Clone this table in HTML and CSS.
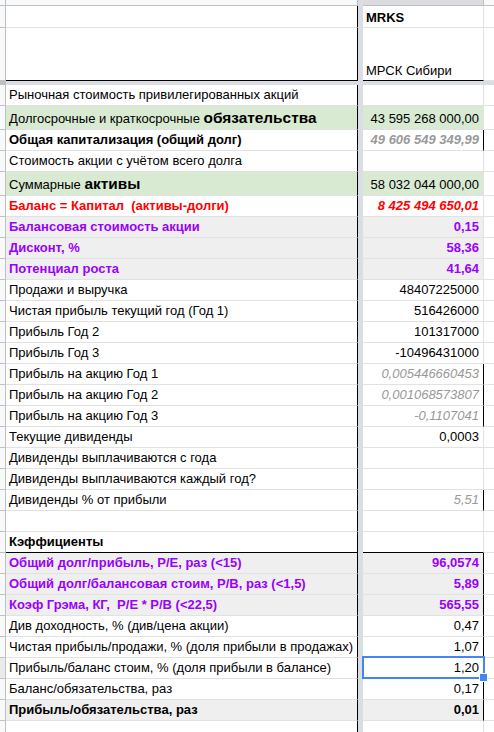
FILE: index.html
```html
<!DOCTYPE html>
<html lang="ru">
<head>
<meta charset="utf-8">
<title>MRKS</title>
<link rel="stylesheet" href="styles.css">
</head>
<body>
<div class="sheet">
  <div class="row colheads">
    <div class="rh corner"></div>
    <div class="ch cha"></div>
    <div class="fz"></div>
    <div class="ch chb"></div>
    <div class="ch chc"></div>
  </div>

  <div class="row r-ticker">
    <div class="rh"></div>
    <div class="c a"></div>
    <div class="fz"></div>
    <div class="c b left bold">MRKS</div>
    <div class="c x"></div>
  </div>
  <div class="row r-name bb-black">
    <div class="rh"></div>
    <div class="c a"></div>
    <div class="fz"></div>
    <div class="c b left">МРСК Сибири</div>
    <div class="c x"></div>
  </div>

  <div class="row hfreeze">
    <div class="rh handle"></div>
    <div class="hbar"></div>
  </div>

  <div class="row">
    <div class="rh"></div>
    <div class="c a">Рыночная стоимость привилегированных акций</div>
    <div class="fz"></div>
    <div class="c b"></div>
    <div class="c x"></div>
  </div>
  <div class="row tall green">
    <div class="rh"></div>
    <div class="c a">Долгосрочные и краткосрочные&nbsp;<b class="big">обязательства</b></div>
    <div class="fz"></div>
    <div class="c b">43 595 268 000,00</div>
    <div class="c x"></div>
  </div>
  <div class="row">
    <div class="rh"></div>
    <div class="c a bold">Общая капитализация (общий долг)</div>
    <div class="fz"></div>
    <div class="c b bold italic muted rb">49 606 549 349,99</div>
    <div class="c x"></div>
  </div>
  <div class="row">
    <div class="rh"></div>
    <div class="c a">Стоимость акции с учётом всего долга</div>
    <div class="fz"></div>
    <div class="c b"></div>
    <div class="c x"></div>
  </div>
  <div class="row tall green">
    <div class="rh"></div>
    <div class="c a">Суммарные&nbsp;<b class="big">активы</b></div>
    <div class="fz"></div>
    <div class="c b">58 032 044 000,00</div>
    <div class="c x"></div>
  </div>
  <div class="row red">
    <div class="rh"></div>
    <div class="c a bold">Баланс = Капитал &nbsp;(активы-долги)</div>
    <div class="fz"></div>
    <div class="c b bold italic">8 425 494 650,01</div>
    <div class="c x"></div>
  </div>
  <div class="row grey purple">
    <div class="rh"></div>
    <div class="c a bold">Балансовая стоимость акции</div>
    <div class="fz"></div>
    <div class="c b bold">0,15</div>
    <div class="c x"></div>
  </div>
  <div class="row grey purple">
    <div class="rh"></div>
    <div class="c a bold">Дисконт, %</div>
    <div class="fz"></div>
    <div class="c b bold">58,36</div>
    <div class="c x"></div>
  </div>
  <div class="row grey purple">
    <div class="rh"></div>
    <div class="c a bold">Потенциал роста</div>
    <div class="fz"></div>
    <div class="c b bold">41,64</div>
    <div class="c x"></div>
  </div>
  <div class="row">
    <div class="rh"></div>
    <div class="c a">Продажи и выручка</div>
    <div class="fz"></div>
    <div class="c b">48407225000</div>
    <div class="c x"></div>
  </div>
  <div class="row">
    <div class="rh"></div>
    <div class="c a">Чистая прибыль текущий год (Год 1)</div>
    <div class="fz"></div>
    <div class="c b">516426000</div>
    <div class="c x"></div>
  </div>
  <div class="row">
    <div class="rh"></div>
    <div class="c a">Прибыль Год 2</div>
    <div class="fz"></div>
    <div class="c b">101317000</div>
    <div class="c x"></div>
  </div>
  <div class="row">
    <div class="rh"></div>
    <div class="c a">Прибыль Год 3</div>
    <div class="fz"></div>
    <div class="c b">-10496431000</div>
    <div class="c x"></div>
  </div>
  <div class="row">
    <div class="rh"></div>
    <div class="c a">Прибыль на акцию Год 1</div>
    <div class="fz"></div>
    <div class="c b italic muted rb">0,005446660453</div>
    <div class="c x"></div>
  </div>
  <div class="row">
    <div class="rh"></div>
    <div class="c a">Прибыль на акцию Год 2</div>
    <div class="fz"></div>
    <div class="c b italic muted rb">0,001068573807</div>
    <div class="c x"></div>
  </div>
  <div class="row">
    <div class="rh"></div>
    <div class="c a">Прибыль на акцию Год 3</div>
    <div class="fz"></div>
    <div class="c b italic muted rb">-0,1107041</div>
    <div class="c x"></div>
  </div>
  <div class="row">
    <div class="rh"></div>
    <div class="c a">Текущие дивиденды</div>
    <div class="fz"></div>
    <div class="c b">0,0003</div>
    <div class="c x"></div>
  </div>
  <div class="row">
    <div class="rh"></div>
    <div class="c a">Дивиденды выплачиваются с года</div>
    <div class="fz"></div>
    <div class="c b"></div>
    <div class="c x"></div>
  </div>
  <div class="row">
    <div class="rh"></div>
    <div class="c a">Дивиденды выплачиваются каждый год?</div>
    <div class="fz"></div>
    <div class="c b"></div>
    <div class="c x"></div>
  </div>
  <div class="row">
    <div class="rh"></div>
    <div class="c a">Дивиденды % от прибыли</div>
    <div class="fz"></div>
    <div class="c b italic muted rb">5,51</div>
    <div class="c x"></div>
  </div>
  <div class="row">
    <div class="rh"></div>
    <div class="c a"></div>
    <div class="fz"></div>
    <div class="c b"></div>
    <div class="c x"></div>
  </div>
  <div class="row bb-black">
    <div class="rh"></div>
    <div class="c a bold">Кэффициенты</div>
    <div class="fz"></div>
    <div class="c b"></div>
    <div class="c x"></div>
  </div>
  <div class="row grey purple">
    <div class="rh"></div>
    <div class="c a bold">Общий долг/прибыль, P/E, раз (&lt;15)</div>
    <div class="fz"></div>
    <div class="c b bold rb">96,0574</div>
    <div class="c x"></div>
  </div>
  <div class="row grey purple">
    <div class="rh"></div>
    <div class="c a bold">Общий долг/балансовая стоим, P/B, раз (&lt;1,5)</div>
    <div class="fz"></div>
    <div class="c b bold rb">5,89</div>
    <div class="c x"></div>
  </div>
  <div class="row grey purple">
    <div class="rh"></div>
    <div class="c a bold">Коэф Грэма, КГ, &nbsp;P/E * P/B (&lt;22,5)</div>
    <div class="fz"></div>
    <div class="c b bold rb">565,55</div>
    <div class="c x"></div>
  </div>
  <div class="row">
    <div class="rh"></div>
    <div class="c a">Див доходность, % (див/цена акции)</div>
    <div class="fz"></div>
    <div class="c b rb">0,47</div>
    <div class="c x"></div>
  </div>
  <div class="row">
    <div class="rh"></div>
    <div class="c a">Чистая прибыль/продажи, % (доля прибыли в продажах)</div>
    <div class="fz"></div>
    <div class="c b rb">1,07</div>
    <div class="c x"></div>
  </div>
  <div class="row">
    <div class="rh sel"></div>
    <div class="c a">Прибыль/баланс стоим, % (доля прибыли в балансе)</div>
    <div class="fz"></div>
    <div class="c b rb selected">1,20</div>
    <div class="c x"></div>
  </div>
  <div class="row">
    <div class="rh"></div>
    <div class="c a">Баланс/обязательства, раз</div>
    <div class="fz"></div>
    <div class="c b rb">0,17</div>
    <div class="c x"></div>
  </div>
  <div class="row grey">
    <div class="rh"></div>
    <div class="c a bold">Прибыль/обязательства, раз</div>
    <div class="fz"></div>
    <div class="c b bold rb">0,01</div>
    <div class="c x"></div>
  </div>
  <div class="row">
    <div class="rh"></div>
    <div class="c a"></div>
    <div class="fz"></div>
    <div class="c b"></div>
    <div class="c x"></div>
  </div>
</div>
</body>
</html>
```

FILE: styles.css
```css
* { box-sizing: border-box; }
html, body {
  margin: 0;
  padding: 0;
  background: #ffffff;
}
body {
  width: 494px;
  height: 732px;
  overflow: hidden;
  font-family: "Liberation Sans", Arial, sans-serif;
  font-size: 13px;
  color: #000000;
}
.sheet {
  display: flex;
  flex-direction: column;
  width: 494px;
}
.row {
  display: flex;
  height: 21px;
  flex: none;
}
.rh {
  width: 6px;
  flex: none;
  background: #f8f9fa;
  border-right: 1px solid #c0c0c0;
  border-bottom: 1px solid #c0c0c0;
}
.rh.sel { background: #e8eaed; }
.fz {
  width: 5px;
  flex: none;
  background: #dadde4;
}
.c {
  display: flex;
  align-items: flex-end;
  justify-content: flex-end;
  padding: 0 4px 3px 3px;
  line-height: 15px;
  white-space: nowrap;
  overflow: hidden;
  border-bottom: 1px solid #e2e2e2;
  flex: none;
}
.c.a {
  width: 352px;
  justify-content: flex-start;
  border-right: 1px solid #000000;
  overflow: visible;
}
.c.b {
  width: 121px;
  border-right: 1px solid #e2e2e2;
  position: relative;
  overflow: visible;
}
.c.b.left { justify-content: flex-start; }
.c.b.rb { border-right-color: #000000; }
.c.x {
  flex: 1;
  padding: 0;
}

/* column headers */
.colheads { height: 6px; }
.colheads .rh { border-bottom: 1px solid #c0c0c0; }
.ch {
  flex: none;
  background: #f8f9fa;
  border-bottom: 1px solid #c0c0c0;
  border-right: 1px solid #c0c0c0;
}
.cha { width: 352px; }
.chb { width: 121px; background: #dadce0; }
.chc { flex: 1; border-right: 0; }

/* frozen rows */
.r-ticker { height: 22px; }
.r-ticker .c { padding-bottom: 2px; }
.r-name { height: 53px; }
.r-name .c { padding-bottom: 2px; }
.bb-black .c.a,
.bb-black .c.b { border-bottom-color: #000000; }
.hfreeze { height: 4px; }
.hfreeze .rh { border-bottom: 0; background: #c0c0c0; }
.hbar { flex: 1; background: #dadde4; }

.tall { height: 24px; }
.tall .c { padding-bottom: 3px; }
.big { font-size: 15.4px; line-height: 17px; }

.bold { font-weight: bold; }
.italic { font-style: italic; }
.muted { color: #999999; }

.green .c.a, .green .c.b { background: #d9ead3; }
.grey .c.a, .grey .c.b { background: #efefef; }
.red .c { color: #ff0000; }
.purple .c { color: #9900ff; }

.selected::after {
  content: "";
  position: absolute;
  left: -1px;
  top: -2px;
  right: -2px;
  bottom: -1px;
  border: 2px solid #4285f4;
  pointer-events: none;
}
.selected::before {
  content: "";
  position: absolute;
  right: -5px;
  bottom: -4px;
  width: 7px;
  height: 7px;
  background: #4285f4;
  border: 1px solid #ffffff;
  z-index: 2;
}
```
